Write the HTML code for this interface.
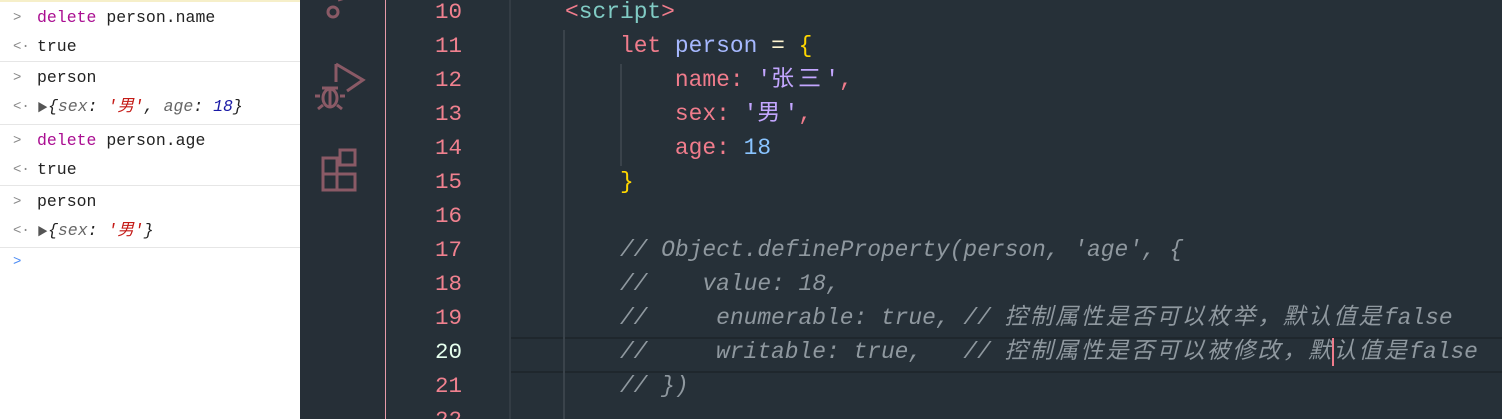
<!DOCTYPE html>
<html><head><meta charset="utf-8"><style>
html,body{margin:0;width:1502px;height:419px;overflow:hidden}
body{background:#263038;position:relative;font-family:"Liberation Mono","Noto Sans CJK SC",monospace}
#con{position:absolute;left:0;top:0;width:300px;height:419px;background:#fff;font-size:16.5px;line-height:20px}
#con .r{position:absolute;left:37px;white-space:pre;color:#222;height:20px;overflow:visible}
#con .p{position:absolute;left:13px;color:#888;font-size:14px}
#con .s{position:absolute;left:0;width:300px;height:1px;background:#e6e6e6}
.kw{color:#aa0d91}.bl{color:#1a1aa6}.it{font-style:italic}.st{color:#c41a16}
#act{position:absolute;left:300px;top:0;width:85px;height:419px;background:#262f37;border-right:1px solid #e79aa8}
.ln{position:absolute;left:386px;width:76px;text-align:right;color:#f0818f;font-size:22.5px;line-height:28px;height:28px}
.cd{position:absolute;left:565px;white-space:pre;font-size:22.9px;color:#cfd8dc;line-height:28px;height:28px}
.cm{color:#8f989f;font-style:italic}
.c{letter-spacing:4.2px}
.cm .c{letter-spacing:2.4px}
.g{position:absolute;width:2px;background:#3a434b}
.cur{display:inline-block;width:2px;height:28px;background:#f07c8c;vertical-align:top;margin:0 -1px}
</style></head><body>
<div id="con">
<div style="position:absolute;left:0;top:0;width:300px;height:2px;background:#f6efc9"></div>
<span class="p" style="top:8px">&gt;</span><div class="r" style="top:8px"><span class="kw">delete</span> person.name</div>
<span class="p" style="top:37px">&lt;·</span><div class="r bl" style="top:37px">true</div>
<div class="s" style="top:61px"></div>
<span class="p" style="top:68px">&gt;</span><div class="r" style="top:68px">person</div>
<span class="p" style="top:97px">&lt;·</span><div class="r" style="top:97px"><span style="font-size:11px;color:#555">▶</span><span class="it">{<span style="color:#666">sex</span>: <span class="st">'男'</span>, <span style="color:#666">age</span>: <span class="bl">18</span>}</span></div>
<div class="s" style="top:124px"></div>
<span class="p" style="top:131px">&gt;</span><div class="r" style="top:131px"><span class="kw">delete</span> person.age</div>
<span class="p" style="top:160px">&lt;·</span><div class="r bl" style="top:160px">true</div>
<div class="s" style="top:185px"></div>
<span class="p" style="top:192px">&gt;</span><div class="r" style="top:192px">person</div>
<span class="p" style="top:221px">&lt;·</span><div class="r" style="top:221px"><span style="font-size:11px;color:#555">▶</span><span class="it">{<span style="color:#666">sex</span>: <span class="st">'男'</span>}</span></div>
<div class="s" style="top:247px"></div>
<span class="p" style="top:252px;color:#4a8af4">&gt;</span>
</div>
<div id="act">
<svg width="85" height="419" fill="none" stroke="#8a5a66" stroke-width="3">
<circle cx="33" cy="12" r="5"/><path d="M38 0 L45 -2"/>
<path d="M36 64 L36 82 M36 64 L63 80 L47 91"/>
<ellipse cx="30" cy="98" rx="7" ry="9"/><path d="M22 88 h16 M20 96 h-5 M40 96 h5 M23 105 l-5 4 M37 105 l5 4 M30 89 v18"/>
<path d="M23 158 h14 v32 h-14 z M23 174 h32 v16 h-18 M37 174 v-10"/>
<rect x="40" y="150" width="15" height="15"/>
</svg>
</div>
<div style="position:absolute;left:510px;top:337px;width:992px;height:32px;border-top:2px solid #1f272d;border-bottom:2px solid #1f272d"></div>
<div class="g" style="left:509px;top:0;height:419px;background:#333c44"></div>
<div class="g" style="left:563px;top:30px;height:389px"></div>
<div class="g" style="left:620px;top:64px;height:102px"></div>
<div class="ln" style="top:-2px">10</div><div class="ln" style="top:32px">11</div><div class="ln" style="top:66px">12</div><div class="ln" style="top:100px">13</div><div class="ln" style="top:134px">14</div><div class="ln" style="top:168px">15</div><div class="ln" style="top:202px">16</div><div class="ln" style="top:236px">17</div><div class="ln" style="top:270px">18</div><div class="ln" style="top:304px">19</div><div class="ln" style="top:338px;color:#e6ffee">20</div><div class="ln" style="top:372px">21</div><div class="ln" style="top:406px">22</div>
<div class="cd" style="top:-2px"><span style="color:#f07c8c">&lt;</span><span style="color:#80cbc4">script</span><span style="color:#f07c8c">&gt;</span></div>
<div class="cd" style="top:32px">    <span style="color:#f07c8c">let</span> <span style="color:#a6b8ff">person</span> <span style="color:#fff5d0">=</span> <span style="color:#ffd700">{</span></div>
<div class="cd" style="top:66px">        <span style="color:#f07c8c">name:</span> <span style="color:#c3a6ff">'<span class="c">张三</span>'</span><span style="color:#f07c8c">,</span></div>
<div class="cd" style="top:100px">        <span style="color:#f07c8c">sex:</span> <span style="color:#c3a6ff">'<span class="c">男</span>'</span><span style="color:#f07c8c">,</span></div>
<div class="cd" style="top:134px">        <span style="color:#f07c8c">age:</span> <span style="color:#89c4ff">18</span></div>
<div class="cd" style="top:168px">    <span style="color:#ffd700">}</span></div>
<div class="cd cm" style="top:236px">    // Object.defineProperty(person, 'age', {</div>
<div class="cd cm" style="top:270px">    //    value: 18,</div>
<div class="cd cm" style="top:304px">    //     enumerable: true, // <span class="c">控制属性是否可以枚举，默认值是</span>false</div>
<div class="cd cm" style="top:338px">    //     writable: true,   // <span class="c">控制属性是否可以被修改，默</span><span class="cur"></span><span class="c">认值是</span>false</div>
<div class="cd cm" style="top:372px">    // })</div>
</body></html>
